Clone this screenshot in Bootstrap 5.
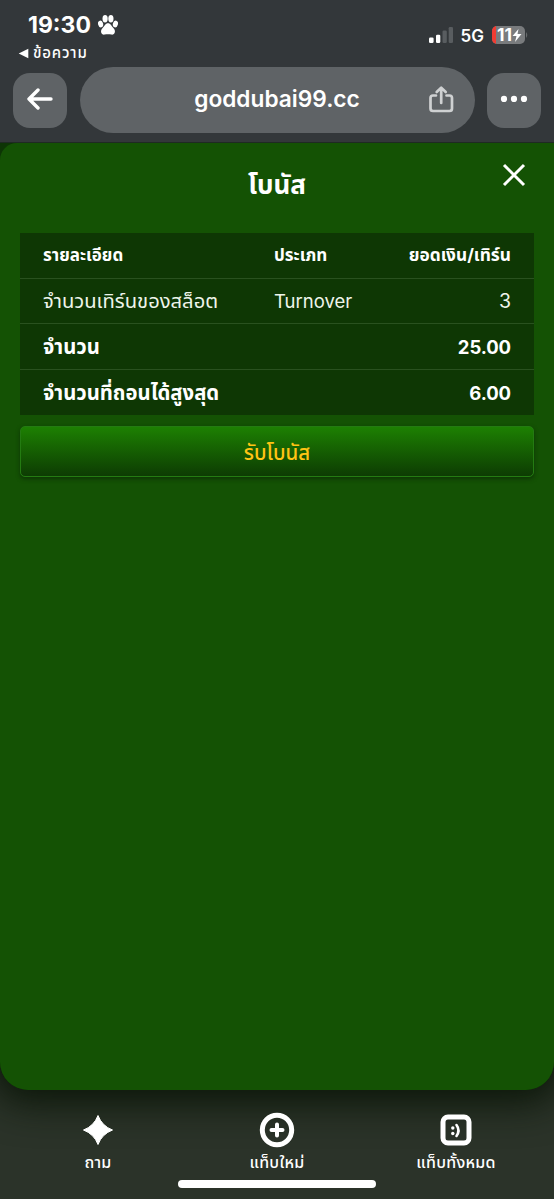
<!DOCTYPE html>
<html lang="th">
<head>
<meta charset="utf-8">
<meta name="viewport" content="width=device-width, initial-scale=1">
<title>โบนัส</title>
<link href="https://cdn.jsdelivr.net/npm/bootstrap@5.3.0/dist/css/bootstrap.min.css" rel="stylesheet">
<style>
body{height:1199px;overflow:hidden;background:#2b3329;color:#fff;font-family:Inter,"Noto Sans Thai","Noto Sans",sans-serif;line-height:1}
svg{display:block;flex:none}
.chrome{height:143px;background:#33373a;border-bottom:1px solid #1f2a23;position:relative;z-index:1}
.status{height:67px;padding:14px 26px 0 18px}
.clock{font-size:23px;font-weight:700;line-height:22px;padding-left:10px;gap:7px}
.backapp{font-size:15px;font-weight:500;line-height:18px;margin-top:8px}
.backapp span{letter-spacing:.85px}
.net{font-size:17px;font-weight:600;padding-top:2px}
.signal{margin-top:12px;height:18px}
.tools{padding:0 13px}
.sq{width:54px;height:55px;border-radius:17px;background:#5f6366}
.address{width:395px;height:66px;border-radius:33px;background:#5f6366;position:relative}
.address span{font-size:22.7px;font-weight:600;margin-top:-2px}
.address svg{position:absolute;left:347px;top:18px}
.stage{height:947px;background:#0d3505;border-radius:0 0 28px 28px;box-shadow:0 4px 38px 9px #0b1608;position:relative}
.sheet{height:100%;background:#145204;border-radius:17px 0 28px 28px;padding:0 20px}
.sheet-head{height:90px;position:relative;padding-top:27px}
.sheet-head h1{font-size:26px;font-weight:700;line-height:30px}
.close-x{position:absolute;right:8px;top:20px}
.bonus{--bs-table-bg:#0e3704;--bs-table-color:#fff;--bs-table-border-color:#29511f;table-layout:fixed;line-height:20px;margin:0}
.bonus th,.bonus td{padding:1px 23px 0;height:45.7px;vertical-align:middle;white-space:nowrap}
.bonus thead th{height:45px;font-size:17px;padding-top:0}
.bonus thead th:last-child{font-size:17.3px}
.bonus tbody td{font-size:18.5px;color:#eef5eb}
.bonus tbody td:first-child{font-size:20.2px}
.bonus tbody td:last-child{font-size:19.5px}
.bonus tbody th{font-size:20.3px}
.bonus tbody th:last-child{font-size:18.5px;letter-spacing:-.1px}
.bonus tr>:nth-child(2):not(:last-child){padding-left:0}
.bonus tbody tr:last-child>*{border-bottom:0}
.claim{height:51px;margin-top:11px;border:1px solid #247b12;border-radius:5px;background:linear-gradient(#1d8002,#0d3c03);color:#ffc414;font-size:20.5px;font-weight:500;box-shadow:0 2px 4px #0d3505;padding:3px 0 0}
.bottom{height:109px;position:relative;z-index:1}
.tab{position:relative;width:179px;padding-top:22px;font-size:16px;font-weight:500}
.tab span{line-height:20px;margin-top:4px;white-space:nowrap;letter-spacing:.25px}
.home-bar{position:absolute;width:198px;height:8px;border-radius:4px;background:#fff;left:178px;bottom:11px}
</style>
<script src="https://cdn.jsdelivr.net/npm/bootstrap@5.3.0/dist/js/bootstrap.bundle.min.js"></script>
</head>
<body class="d-flex flex-column">
<header class="chrome">
  <div class="status d-flex justify-content-between align-items-start">
    <div>
      <div class="clock d-flex align-items-center"><span>19:30</span>
        <svg width="20" height="20" viewBox="0 0 20 20" fill="#fff"><ellipse cx="2.6" cy="9" rx="2.5" ry="3.4" transform="rotate(-15 2.6 9)"/><ellipse cx="7.1" cy="3.8" rx="2.6" ry="3.7"/><ellipse cx="12.9" cy="3.8" rx="2.6" ry="3.7"/><ellipse cx="17.4" cy="9" rx="2.5" ry="3.4" transform="rotate(15 17.4 9)"/><path d="M10 8.3C12.7 8.3 13.2 11 15.2 12.8C18.4 16 16.8 20 13.5 19.6C11 19 9 19 6.5 19.6C3.2 20 1.6 16 4.8 12.8C6.8 11 7.3 8.3 10 8.3Z"/></svg>
      </div>
      <div class="backapp d-flex align-items-center"><svg width="11" height="11" class="me-1" viewBox="0 0 11 11"><path d="M.7 5.5L10.3.7V10.3Z" fill="#fff"/></svg><span>ข้อความ</span></div>
    </div>
    <div class="signal d-flex align-items-center">
      <svg width="26" height="18" viewBox="0 0 26 18"><g fill="#fff"><rect x="2" y="11.5" width="4.6" height="5.6" rx="1.3"/><rect x="9" y="8.7" width="4.3" height="8.4" rx="1.3"/></g><g fill="#595d60"><rect x="15.5" y="4.5" width="4.3" height="12.6" rx="1.3"/><rect x="21.7" y="1" width="4.3" height="16.1" rx="1.3"/></g></svg>
      <span class="net ms-2">5G</span>
      <svg class="ms-2" width="36" height="18" viewBox="0 0 36 18"><defs><clipPath id="cell"><rect width="33" height="18" rx="5"/></clipPath></defs><g clip-path="url(#cell)"><rect width="33" height="18" fill="#797b7d"/><rect width="4" height="18" fill="#f23c32"/></g><path d="M34 6Q36.5 9 34 12Z" fill="#686b6d"/><text x="5" y="15" font-size="17" font-weight="700" fill="#fff" textLength="15" lengthAdjust="spacingAndGlyphs">11</text><path d="M26.5 3L20.5 10H24.5L23 16L29.5 8H25.5Z" fill="#fff"/></svg>
    </div>
  </div>
  <div class="tools d-flex align-items-center justify-content-between">
    <div class="sq d-flex align-items-center justify-content-center"><svg class="mb-1" width="28" height="24" viewBox="0 0 28 24" fill="none" stroke="#fff" stroke-width="3.4" stroke-linecap="round" stroke-linejoin="round"><path d="M12 4L3 13L12 22M3 13H25"/></svg></div>
    <div class="address d-flex align-items-center justify-content-center"><span>goddubai99.cc</span><svg width="28" height="30" viewBox="0 0 28 30" fill="none" stroke="#cfd1d2" stroke-width="2.7" stroke-linecap="round" stroke-linejoin="round"><path d="M9 10.5H6Q3.5 10.5 3.5 13V23.5Q3.5 26 6 26H22.5Q25 26 25 23.5V13Q25 10.5 22.5 10.5H19.5M14.2 18V3M9.7 7L14.2 2.6L18.7 7"/></svg></div>
    <div class="sq d-flex align-items-center justify-content-center"><svg class="mb-1" width="28" height="8" viewBox="0 0 28 8" fill="#fff"><circle cx="4" cy="4.9" r="3.1"/><circle cx="14" cy="4.9" r="3.1"/><circle cx="24" cy="4.9" r="3.1"/></svg></div>
  </div>
</header>
<main class="stage">
  <section class="sheet">
    <div class="sheet-head text-center"><h1 class="m-0"><span>โบนัส</span></h1><svg class="close-x" width="24" height="24" viewBox="0 0 24 24" stroke="#fff" stroke-width="3"><path d="M2 2L22 22M22 2L2 22"/></svg></div>
    <table class="table bonus">
      <colgroup><col style="width:254px"><col style="width:100px"><col></colgroup>
      <thead><tr><th><span>รายละเอียด</span></th><th><span>ประเภท</span></th><th class="text-end"><span>ยอดเงิน/เทิร์น</span></th></tr></thead>
      <tbody>
        <tr><td>จำนวนเทิร์นของสล็อต</td><td>Turnover</td><td class="text-end">3</td></tr>
        <tr><th colspan="2">จำนวน</th><th class="text-end">25.00</th></tr>
        <tr><th colspan="2">จำนวนที่ถอนได้สูงสุด</th><th class="text-end">6.00</th></tr>
      </tbody>
    </table>
    <button class="btn claim w-100">รับโบนัส</button>
  </section>
</main>
<nav class="bottom d-flex justify-content-center">
  <div class="tab d-flex flex-column align-items-center"><svg width="36" height="36" viewBox="0 0 36 36"><path d="M18 3.5Q22 14 32.5 18Q22 22 18 32.5Q14 22 3.5 18Q14 14 18 3.5Z" fill="#fff" stroke="#fff" stroke-linejoin="round"/></svg><span>ถาม</span></div>
  <div class="tab d-flex flex-column align-items-center"><svg width="36" height="36" viewBox="0 0 36 36" fill="none" stroke="#fff" stroke-linecap="round"><circle cx="18" cy="18" r="14.7" stroke-width="5"/><path d="M18 12.5V23.5M12.5 18H23.5" stroke-width="4"/></svg><span>แท็บใหม่</span></div>
  <div class="tab d-flex flex-column align-items-center"><svg width="36" height="36" viewBox="0 0 36 36" fill="none" stroke="#fff"><rect x="5" y="5" width="26" height="26" rx="5" stroke-width="5"/><path d="M18.5 13Q22.5 18.5 18.5 24" stroke-width="2.6" stroke-linecap="round"/><circle cx="14.8" cy="16" r="1.7" fill="#fff" stroke="none"/><circle cx="14.8" cy="21.5" r="1.7" fill="#fff" stroke="none"/></svg><span>แท็บทั้งหมด</span></div>
  <div class="home-bar"></div>
</nav>
</body>
</html>
